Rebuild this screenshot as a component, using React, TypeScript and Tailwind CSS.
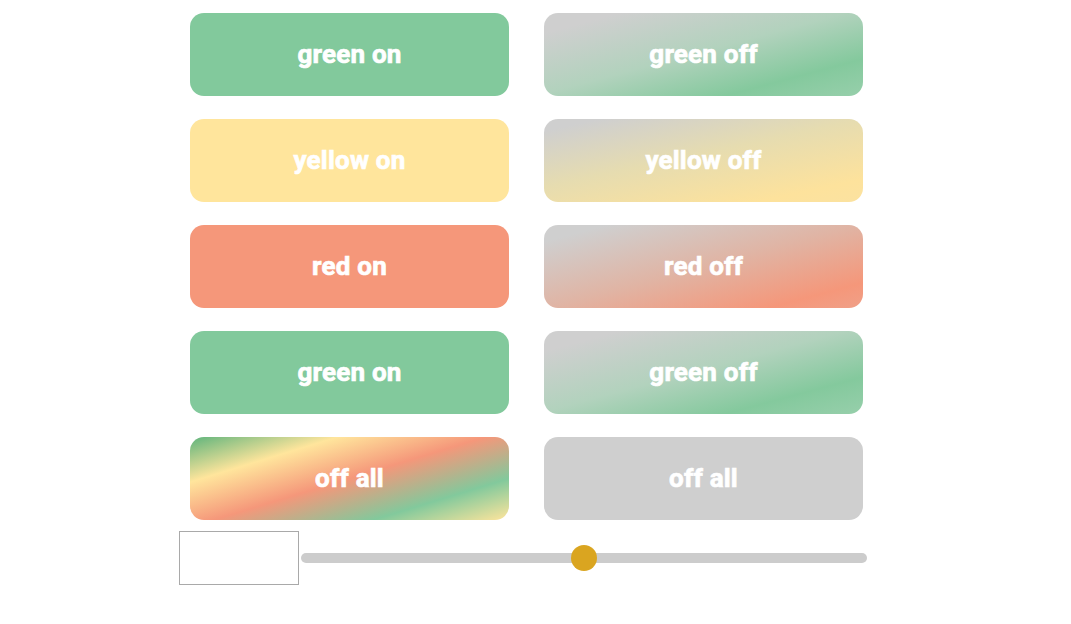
import { useState } from "react";

const onStyles: Record<string, string> = {
  green: "bg-[#82c99c]",
  yellow: "bg-[#ffe59c]",
  red: "bg-[#f5977a]",
};

const offStyles: Record<string, string> = {
  green: "bg-[linear-gradient(165deg,#cfcfcf_12%,#b2d2bd_48%,#84c99d_78%,#97cfab_100%)]",
  yellow: "bg-[linear-gradient(168deg,#cfcfcf_8%,#e6dcb0_45%,#fde29c_85%,#fbe2a0_100%)]",
  red: "bg-[linear-gradient(165deg,#cfcfcf_10%,#e0b4a4_50%,#f5977a_85%,#f0a088_100%)]",
};

function Btn({ label, className }: { label: string; className: string }) {
  return (
    <button
      className={`h-[83px] w-[319px] rounded-[14px] text-white text-[26px] font-bold tracking-[0.2px] [-webkit-text-stroke:0.7px_white] ${className}`}
      style={{ fontFamily: "Roboto, 'Liberation Sans', sans-serif" }}
    >
      {label}
    </button>
  );
}

export default function App() {
  const [value] = useState(50);
  const rows = ["green", "yellow", "red", "green"];

  return (
    <div className="min-h-screen bg-white">
      <div className="pl-[190px] pt-[13px]">
        <div className="grid grid-cols-[319px_319px] gap-x-[35px] gap-y-[23px]">
          {rows.map((c, i) => (
            <div key={i} className="contents">
              <Btn label={`${c} on`} className={onStyles[c]} />
              <Btn label={`${c} off`} className={offStyles[c]} />
            </div>
          ))}
          <Btn
            label="off all"
            className="bg-[linear-gradient(163deg,#5fb47c_0%,#ffe59c_25%,#f5977a_50%,#82c99c_77%,#ffe59c_100%)]"
          />
          <Btn label="off all" className="bg-[#cfcfcf]" />
        </div>
      </div>

      <div className="flex items-center pl-[179px] mt-[11px]">
        <div className="h-[54px] w-[120px] border border-[#a9a9a9] bg-white" />
        <div className="relative ml-[2px] h-[10px] w-[566px] rounded-full bg-[#cccccc]">
          <div
            className="absolute top-1/2 h-[26px] w-[26px] -translate-x-1/2 -translate-y-1/2 rounded-full bg-[#daa520]"
            style={{ left: `${value}%` }}
          />
        </div>
      </div>
    </div>
  );
}
